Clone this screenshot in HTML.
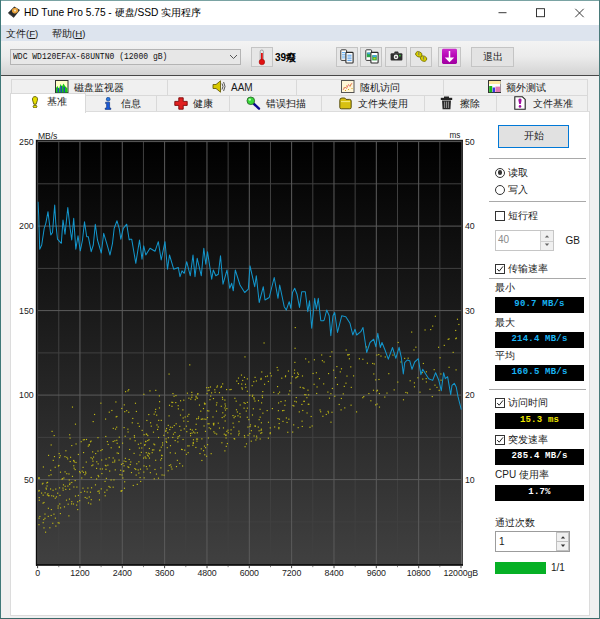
<!DOCTYPE html>
<html><head><meta charset="utf-8">
<style>
*{box-sizing:border-box;margin:0;padding:0}
html,body{width:600px;height:619px;overflow:hidden;background:#f0f0f0}
body{font-family:"Liberation Sans",sans-serif;font-size:9.6px;color:#1a1a1a;position:relative}
.a{position:absolute}
.t{position:absolute;white-space:nowrap;line-height:12px;height:12px}
.tab{position:absolute;background:#f0f0f0;border:1px solid #d9d9d9}
.btn{position:absolute;background:#e6e6e6;border:1px solid #c4c4c4}
.sep{position:absolute;left:489px;width:97px;height:1px;background:#a9a9a9}
.bb{position:absolute;left:495px;width:89px;height:16px;background:#000;text-align:center;font-family:"Liberation Mono",monospace;font-weight:bold;font-size:9px;line-height:14px;letter-spacing:0.2px}
.cb{position:absolute;left:495px;width:10px;height:10px;border:1px solid #333;background:#fff}
.cb svg{position:absolute;left:0;top:0}
.ax{position:absolute;letter-spacing:-0.1px;font-size:8.8px;line-height:10px;height:10px;color:#222;white-space:nowrap}
.axl{width:30px;left:3.5px;text-align:right}
.axb{width:40px;text-align:center;top:568px}
</style></head><body>

<!-- title bar -->
<div class="a" style="left:0;top:0;width:600px;height:25px;background:#fff"></div>
<svg class="a" style="left:7px;top:5px" width="14" height="14" viewBox="7 5 14 14">
 <path d="M7.9 13 L14.3 6.6 L20 10 L13.7 17.8 Z" fill="#2b2b2b"/>
 <path d="M9 13.6 L13.4 16.8" stroke="#555" stroke-width="0.8"/>
 <ellipse cx="15" cy="10.6" rx="3.1" ry="2.7" fill="#e8a23a" transform="rotate(-20 15 10.6)"/>
 <circle cx="15" cy="10.6" r="1.1" fill="#f3e3c3"/>
</svg>
<div class="t" style="left:24px;top:6.5px;font-size:10.2px;color:#000" id="title">HD Tune Pro 5.75 - 硬盘/SSD 实用程序</div>
<svg class="a" style="left:495px;top:5px" width="95" height="16" viewBox="0 0 95 16">
 <path d="M3.5 7.7 H11.5" stroke="#222" stroke-width="0.9" fill="none"/>
 <rect x="41.5" y="3.7" width="8" height="8" stroke="#222" stroke-width="0.9" fill="none"/>
 <path d="M80.3 3.8 L88.7 12.2 M88.7 3.8 L80.3 12.2" stroke="#222" stroke-width="0.9" fill="none"/>
</svg>

<!-- menu bar -->
<div class="a" style="left:0;top:25px;width:600px;height:16px;background:#dde4ee"></div>
<div class="t" style="left:6px;top:27.5px">文件(<u>F</u>)</div>
<div class="t" style="left:52px;top:27.5px">帮助(<u>H</u>)</div>

<!-- toolbar -->
<div class="a" style="left:0;top:41px;width:600px;height:34px;background:linear-gradient(#f3f3f3 0,#ececec 45%,#d3d3d3 100%)"></div>
<div class="a" style="left:0;top:74.5px;width:600px;height:1.3px;background:#484848"></div>
<div class="a" style="left:10px;top:49px;width:231px;height:16px;background:#e7e7e7;border:1px solid #b4b4b4"></div>
<div class="t" style="left:12.5px;top:51px;font-family:'Liberation Mono',monospace;font-size:9.6px;color:#111;transform:scaleX(0.838);transform-origin:0 50%" id="drive">WDC WD120EFAX-68UNTN0 (12000 gB)</div>
<svg class="a" style="left:229px;top:54px" width="9" height="6" viewBox="0 0 9 6"><path d="M1 1 L4.5 4.5 L8 1" stroke="#555" stroke-width="1" fill="none"/></svg>

<div class="btn" style="left:250.5px;top:47px;width:22.5px;height:19.5px"></div>
<svg class="a" style="left:256px;top:48.5px" width="12" height="17" viewBox="0 0 12 17">
 <rect x="4.2" y="1" width="3.2" height="11" rx="1.6" fill="#e8e8e8" stroke="#777" stroke-width="0.6"/>
 <rect x="5" y="4" width="1.8" height="8" fill="#e01010"/>
 <circle cx="5.9" cy="13" r="2.8" fill="#e01010" stroke="#900" stroke-width="0.5"/>
</svg>
<div class="t" style="left:275px;top:51.5px;font-weight:bold;font-size:10px;color:#000">39癈</div>

<div class="btn" style="left:335.5px;top:47px;width:22px;height:19.5px"></div>
<div class="btn" style="left:360px;top:47px;width:22px;height:19.5px"></div>
<div class="btn" style="left:385px;top:47px;width:22px;height:19.5px"></div>
<div class="btn" style="left:410px;top:47px;width:22px;height:19.5px"></div>
<div class="btn" style="left:438px;top:47px;width:23px;height:19.5px"></div>
<!-- copy icons -->
<svg class="a" style="left:339px;top:48px" width="16" height="17" viewBox="339 48 16 17">
 <rect x="340.8" y="49.8" width="5.8" height="10.6" rx="0.8" fill="#fff" stroke="#3a3a3a" stroke-width="1"/>
 <path d="M342 52.5h3.4M342 54.3h3.4M342 56.1h3.4M342 57.9h3.4" stroke="#5aa8f0" stroke-width="0.9"/>
 <rect x="345.9" y="52.4" width="7.2" height="10.6" rx="0.8" fill="#fff" stroke="#2a2a2a" stroke-width="1.1"/>
 <path d="M347.4 55.2h4.2M347.4 57h4.2M347.4 58.800h4.2M347.4 60.6h4.2" stroke="#4a98e8" stroke-width="0.95"/>
</svg>
<svg class="a" style="left:363.5px;top:48px" width="16" height="17" viewBox="339 48 16 17">
 <rect x="340.8" y="49.8" width="5.800" height="10.6" rx="0.8" fill="#fff" stroke="#3a3a3a" stroke-width="1"/>
 <rect x="341.800" y="52.600" width="3.8" height="4.6" fill="#28a848"/><rect x="342.4" y="52.6" width="2.6" height="1.6" fill="#48a0e8"/>
 <rect x="345.9" y="52.4" width="7.200" height="10.6" rx="0.8" fill="#fff" stroke="#2a2a2a" stroke-width="1.1"/>
 <rect x="347.2" y="55.2" width="4.6" height="5.2" fill="#28a848"/><rect x="347.8" y="55.2" width="3.4" height="1.8" fill="#48a0e8"/><rect x="348.4" y="57.6" width="2.2" height="1.8" fill="#c8d020"/>
</svg>
<svg class="a" style="left:390px;top:50px" width="13" height="12" viewBox="390 50 13 12">
 <rect x="390.6" y="53.2" width="11.8" height="7.4" rx="1" fill="#2e2e2e"/>
 <path d="M393.8 53.4 L394.8 51.4 H398 L399 53.4Z" fill="#2e2e2e"/>
 <circle cx="396" cy="56.9" r="2.3" fill="#f0f0f0"/><circle cx="396" cy="56.9" r="1" fill="#555"/>
 <rect x="399" y="54.9" width="1.7" height="1.5" fill="#28c028"/>
</svg>
<svg class="a" style="left:414px;top:50px" width="15" height="14" viewBox="414 50 15 14">
 <ellipse cx="418.8" cy="54.3" rx="3.3" ry="2.600" fill="#d8d000" stroke="#6a6400" stroke-width="0.7" transform="rotate(25 418.8 54.3)"/>
 <ellipse cx="423.6" cy="58.6" rx="3.3" ry="2.6" fill="#d8d000" stroke="#6a6400" stroke-width="0.7" transform="rotate(25 423.6 58.6)"/>
 <path d="M418.8 52.2V55.200M423.6 56.6V59.6" stroke="#777" stroke-width="1"/>
</svg>
<svg class="a" style="left:441px;top:48px" width="17" height="17" viewBox="441 48 17 17">
 <defs><linearGradient id="mg" x1="0" y1="0" x2="0" y2="1"><stop offset="0" stop-color="#cc2ccc"/><stop offset="0.45" stop-color="#b808b8"/><stop offset="1" stop-color="#a000a0"/></linearGradient></defs>
 <rect x="442" y="48.800" width="15" height="15.2" rx="1.4" fill="url(#mg)"/>
 <path d="M449.500 51V60" stroke="#fff" stroke-width="1.5"/>
 <path d="M444.800 57.600 L449.500 62.200 L454.200 57.600 Z" fill="#fff"/>
</svg>
<div class="btn" style="left:471px;top:47px;width:43px;height:20px;background:#e3e3e3;border-color:#c4c4c4"></div>
<div class="t" style="left:471px;top:51px;width:43.5px;text-align:center;font-size:10px">退出</div>

<!-- tabs row 1 -->
<div class="tab" style="left:11px;top:78.5px;width:156.5px;height:17px"></div>
<div class="tab" style="left:166.5px;top:78.5px;width:130px;height:17px"></div>
<div class="tab" style="left:295.5px;top:78.5px;width:148px;height:17px"></div>
<div class="tab" style="left:442.5px;top:78.5px;width:145.5px;height:17px"></div>
<!-- tabs row 2 -->
<div class="tab" style="left:85px;top:94.5px;width:71.5px;height:17px"></div>
<div class="tab" style="left:155.5px;top:94.5px;width:74.5px;height:17px"></div>
<div class="tab" style="left:229px;top:94.5px;width:92.5px;height:17px"></div>
<div class="tab" style="left:320.5px;top:94.5px;width:104px;height:17px"></div>
<div class="tab" style="left:423.5px;top:94.5px;width:73px;height:17px"></div>
<div class="tab" style="left:495.5px;top:94.5px;width:92.5px;height:17px"></div>
<!-- panel -->
<div class="a" style="left:10px;top:111px;width:579.5px;height:504.5px;background:#fff;border:1px solid #dcdcdc"></div>
<!-- selected tab -->
<div class="a" style="left:10px;top:92.5px;width:76px;height:20px;background:#fff;border:1px solid #d9d9d9;border-bottom:none"></div>

<!-- tab icons + labels row1 -->
<svg class="a" style="left:55px;top:80px" width="13.5" height="13" viewBox="0 0 13.5 13">
 <rect x="0.5" y="0.5" width="12.5" height="12" fill="#ffffc8" stroke="#333" stroke-width="1"/>
 <path d="M1 12.5V8l1.5-2 1.5 3 1.5-5 1.5 2.5 1.5-3 1.5 2.5 1.5 1.5 1 1v4z" fill="#18c818"/>
 <path d="M3.2 12.4V8M6.2 12.4V6M9.2 12.4V7" stroke="#2828d8" stroke-width="1.2"/>
</svg>
<div class="t" style="left:74px;top:81.5px;font-size:10px">磁盘监视器</div>
<svg class="a" style="left:212px;top:80px" width="14" height="13" viewBox="0 0 14 13">
 <path d="M1 4.5H4L8.5 0.8V12.2L4 8.5H1Z" fill="#d8c800" stroke="#5a5200" stroke-width="0.8"/>
 <path d="M10 3.5Q12 6.5 10 9.5M11.6 2Q14.4 6.5 11.6 11" stroke="#444" stroke-width="0.9" fill="none"/>
</svg>
<div class="t" style="left:231px;top:81.5px;font-size:10px">AAM</div>
<svg class="a" style="left:341px;top:80px" width="13.5" height="13" viewBox="0 0 13.5 13">
 <rect x="0.5" y="0.5" width="12.5" height="12" fill="#fff6d8" stroke="#555" stroke-width="1"/>
 <path d="M2 10l2-3 1.5 1.5 2-4 1.5 2 2-3.5" stroke="#e06060" stroke-width="0.8" fill="none"/>
 <path d="M2.5 8h1M5 6h1M7 9.5h1M9 5h1M10.5 8.5h1M4 10.5h1" stroke="#d0a020" stroke-width="1"/>
</svg>
<div class="t" style="left:360px;top:81.5px;font-size:10px">随机访问</div>
<svg class="a" style="left:487.5px;top:80px" width="13.5" height="13" viewBox="0 0 13.5 13">
 <rect x="0.5" y="0.5" width="12.5" height="12" fill="#fff" stroke="#333" stroke-width="1"/>
 <rect x="1" y="1" width="11.5" height="3" fill="#ffe9a0"/>
 <rect x="1.2" y="6" width="3" height="6.3" fill="#18b818"/>
 <rect x="4.6" y="7.5" width="2.4" height="4.8" fill="#3838e0"/>
 <rect x="7.4" y="6.6" width="4.8" height="5.4" fill="#d84a9a" opacity="0.75"/>
</svg>
<div class="t" style="left:506px;top:81.5px;font-size:10px">额外测试</div>

<!-- row2 -->
<svg class="a" style="left:30.5px;top:95.5px" width="8" height="12.5" viewBox="0 0 8 12.5">
 <path d="M4 0.6C6.2 0.6 6.8 2.4 6.4 4.2L5.2 8.2H2.8L1.6 4.2C1.2 2.4 1.8 0.6 4 0.6Z" fill="#e6e000" stroke="#4a4600" stroke-width="0.8"/>
 <ellipse cx="4" cy="10.6" rx="1.9" ry="1.4" fill="#e6e000" stroke="#4a4600" stroke-width="0.8"/>
</svg>
<div class="t" style="left:47px;top:96px;font-size:10px">基准</div>
<svg class="a" style="left:104px;top:96.5px" width="8" height="13" viewBox="0 0 8 13">
 <circle cx="4.2" cy="2.2" r="1.9" fill="#2a78e0" stroke="#103a80" stroke-width="0.6"/>
 <path d="M1.6 5.2H5.6V11H6.8V12.4H1.2V11H2.6V6.6H1.6Z" fill="#1a5ad8" stroke="#0a2a70" stroke-width="0.6"/>
</svg>
<div class="t" style="left:120.5px;top:97.5px;font-size:10px">信息</div>
<svg class="a" style="left:174px;top:97px" width="14" height="13" viewBox="0 0 14 13">
 <path d="M4.8 0.8H9.2V4.4H13.2V8.4H9.2V12.2H4.8V8.4H0.8V4.4H4.8Z" fill="#e02020" stroke="#7a0808" stroke-width="0.9"/>
</svg>
<div class="t" style="left:193px;top:97.5px;font-size:10px">健康</div>
<svg class="a" style="left:246px;top:96px" width="15" height="14" viewBox="0 0 15 14">
 <path d="M7 7L13 12.6" stroke="#0a0a90" stroke-width="2.4" stroke-linecap="round"/>
 <circle cx="4.8" cy="4.8" r="3.8" fill="#38d838" stroke="#2a6a2a" stroke-width="0.9"/>
 <circle cx="3.8" cy="3.6" r="1.2" fill="#b8ffb8"/>
</svg>
<div class="t" style="left:265.5px;top:97.5px;font-size:10px">错误扫描</div>
<svg class="a" style="left:339px;top:97px" width="13" height="12.5" viewBox="0 0 13 12.5">
 <path d="M0.8 3.2Q0.8 1 3 1H5.2Q6.4 1 7 2.4H10.6Q12.2 2.4 12.2 4V10.4Q12.2 11.8 10.8 11.8H2.2Q0.8 11.8 0.8 10.4Z" fill="#d8c010" stroke="#4a4000" stroke-width="0.9"/>
 <path d="M2 4.6H11" stroke="#f8ec80" stroke-width="1"/>
</svg>
<div class="t" style="left:358px;top:97.5px;font-size:10px">文件夹使用</div>
<svg class="a" style="left:440px;top:96px" width="13" height="14" viewBox="0 0 13 14">
 <rect x="4" y="0.5" width="5" height="2" fill="#222"/>
 <rect x="0.8" y="1.8" width="11.4" height="2.2" fill="#222"/>
 <path d="M2 4.6H11L10.4 13.2H2.6Z" fill="#2a2a2a"/>
 <path d="M4.6 5.6V12M6.5 5.6V12M8.4 5.6V12" stroke="#9a9a9a" stroke-width="0.9"/>
</svg>
<div class="t" style="left:460px;top:97.5px;font-size:10px">擦除</div>
<svg class="a" style="left:514px;top:96px" width="12" height="14" viewBox="0 0 12 14">
 <path d="M0.8 0.8H8.4L11.2 3.4V13.2H0.8Z" fill="#fff" stroke="#222" stroke-width="1.1"/>
 <path d="M6 2.6C7.6 2.6 7.8 4 7.4 5.2L6.8 8H5.2L4.6 5.2C4.2 4 4.4 2.6 6 2.6Z" fill="#a010a0"/>
 <circle cx="6" cy="10.4" r="1.3" fill="#a010a0"/>
</svg>
<div class="t" style="left:532.5px;top:97.5px;font-size:10px">文件基准</div>

<!-- chart -->
<svg class="a" style="left:0;top:0" width="600" height="619" viewBox="0 0 600 619">
 <defs>
  <linearGradient id="bg" x1="0" y1="0" x2="0" y2="1">
   <stop offset="0" stop-color="#000"/><stop offset="1" stop-color="#404040"/>
  </linearGradient>
 </defs>
 <rect x="35.800" y="139.8" width="427.2" height="425.8" fill="#1c1c1c"/>
 <rect x="37.3" y="141.3" width="425.2" height="423" fill="url(#bg)"/>
 <rect x="461" y="141" width="1.6" height="423.3" fill="#fff" fill-opacity="0.2"/>
 <g stroke-width="1" fill="none"><g stroke="#404040"><line x1="58.77" y1="141.5" x2="58.77" y2="564.2"/><line x1="101.11" y1="141.5" x2="101.11" y2="564.2"/><line x1="143.45" y1="141.5" x2="143.45" y2="564.2"/><line x1="185.79" y1="141.5" x2="185.79" y2="564.2"/><line x1="228.13" y1="141.5" x2="228.13" y2="564.2"/><line x1="270.47" y1="141.5" x2="270.47" y2="564.2"/><line x1="312.81" y1="141.5" x2="312.81" y2="564.2"/><line x1="355.15" y1="141.5" x2="355.15" y2="564.2"/><line x1="397.49" y1="141.5" x2="397.49" y2="564.2"/><line x1="439.83" y1="141.5" x2="439.83" y2="564.2"/><line x1="37.5" y1="183.8" x2="461.5" y2="183.8"/><line x1="37.5" y1="268.4" x2="461.5" y2="268.4"/><line x1="37.5" y1="352.9" x2="461.5" y2="352.9"/><line x1="37.5" y1="437.4" x2="461.5" y2="437.4"/><line x1="37.5" y1="521.9" x2="461.5" y2="521.9"/></g><g stroke="#5c5c5c"><line x1="37.60" y1="141.5" x2="37.60" y2="564.2"/><line x1="79.94" y1="141.5" x2="79.94" y2="564.2"/><line x1="122.28" y1="141.5" x2="122.28" y2="564.2"/><line x1="164.62" y1="141.5" x2="164.62" y2="564.2"/><line x1="206.96" y1="141.5" x2="206.96" y2="564.2"/><line x1="249.30" y1="141.5" x2="249.30" y2="564.2"/><line x1="291.64" y1="141.5" x2="291.64" y2="564.2"/><line x1="333.98" y1="141.5" x2="333.98" y2="564.2"/><line x1="376.32" y1="141.5" x2="376.32" y2="564.2"/><line x1="418.66" y1="141.5" x2="418.66" y2="564.2"/><line x1="37.5" y1="141.6" x2="461.5" y2="141.6"/><line x1="37.5" y1="226.1" x2="461.5" y2="226.1"/><line x1="37.5" y1="310.6" x2="461.5" y2="310.6"/><line x1="37.5" y1="395.1" x2="461.5" y2="395.1"/><line x1="37.5" y1="479.6" x2="461.5" y2="479.6"/></g></g>
 <g fill="#c4bc14"><rect x="229.4" y="389.1" width="1.15" height="1.15"/><rect x="252.8" y="408.2" width="1.15" height="1.15"/><rect x="77.8" y="453.9" width="1.15" height="1.15"/><rect x="331.3" y="351.3" width="1.15" height="1.15"/><rect x="104.6" y="495.2" width="1.15" height="1.15"/><rect x="118.5" y="459.5" width="1.15" height="1.15"/><rect x="224.3" y="407.4" width="1.15" height="1.15"/><rect x="249.4" y="426.0" width="1.15" height="1.15"/><rect x="171.4" y="468.5" width="1.15" height="1.15"/><rect x="38.2" y="477.6" width="1.15" height="1.15"/><rect x="68.9" y="498.5" width="1.15" height="1.15"/><rect x="74.9" y="423.6" width="1.15" height="1.15"/><rect x="87.9" y="502.4" width="1.15" height="1.15"/><rect x="375.1" y="379.3" width="1.15" height="1.15"/><rect x="118.7" y="446.4" width="1.15" height="1.15"/><rect x="87.3" y="487.5" width="1.15" height="1.15"/><rect x="166.7" y="447.1" width="1.15" height="1.15"/><rect x="80.4" y="491.8" width="1.15" height="1.15"/><rect x="163.3" y="434.8" width="1.15" height="1.15"/><rect x="140.8" y="451.8" width="1.15" height="1.15"/><rect x="115.3" y="401.4" width="1.15" height="1.15"/><rect x="143.5" y="434.1" width="1.15" height="1.15"/><rect x="121.2" y="407.9" width="1.15" height="1.15"/><rect x="216.3" y="386.6" width="1.15" height="1.15"/><rect x="138.8" y="425.8" width="1.15" height="1.15"/><rect x="290.3" y="382.5" width="1.15" height="1.15"/><rect x="67.1" y="458.3" width="1.15" height="1.15"/><rect x="297.9" y="373.7" width="1.15" height="1.15"/><rect x="45.0" y="531.6" width="1.15" height="1.15"/><rect x="112.6" y="486.6" width="1.15" height="1.15"/><rect x="191.2" y="396.7" width="1.15" height="1.15"/><rect x="97.4" y="437.1" width="1.15" height="1.15"/><rect x="47.0" y="481.8" width="1.15" height="1.15"/><rect x="172.9" y="433.6" width="1.15" height="1.15"/><rect x="186.8" y="392.6" width="1.15" height="1.15"/><rect x="214.5" y="391.7" width="1.15" height="1.15"/><rect x="302.4" y="387.1" width="1.15" height="1.15"/><rect x="71.9" y="406.5" width="1.15" height="1.15"/><rect x="224.3" y="399.5" width="1.15" height="1.15"/><rect x="50.6" y="514.9" width="1.15" height="1.15"/><rect x="146.2" y="433.8" width="1.15" height="1.15"/><rect x="123.7" y="404.3" width="1.15" height="1.15"/><rect x="224.9" y="405.4" width="1.15" height="1.15"/><rect x="122.0" y="442.6" width="1.15" height="1.15"/><rect x="284.7" y="400.2" width="1.15" height="1.15"/><rect x="155.1" y="459.7" width="1.15" height="1.15"/><rect x="128.6" y="458.9" width="1.15" height="1.15"/><rect x="171.4" y="405.7" width="1.15" height="1.15"/><rect x="69.6" y="461.0" width="1.15" height="1.15"/><rect x="168.7" y="464.9" width="1.15" height="1.15"/><rect x="230.4" y="433.2" width="1.15" height="1.15"/><rect x="97.6" y="474.9" width="1.15" height="1.15"/><rect x="327.5" y="410.8" width="1.15" height="1.15"/><rect x="42.6" y="522.1" width="1.15" height="1.15"/><rect x="153.2" y="449.3" width="1.15" height="1.15"/><rect x="204.5" y="403.2" width="1.15" height="1.15"/><rect x="93.0" y="456.5" width="1.15" height="1.15"/><rect x="197.4" y="393.2" width="1.15" height="1.15"/><rect x="313.5" y="383.7" width="1.15" height="1.15"/><rect x="128.2" y="389.1" width="1.15" height="1.15"/><rect x="265.1" y="376.0" width="1.15" height="1.15"/><rect x="73.0" y="460.2" width="1.15" height="1.15"/><rect x="244.2" y="436.7" width="1.15" height="1.15"/><rect x="376.3" y="354.5" width="1.15" height="1.15"/><rect x="97.4" y="450.5" width="1.15" height="1.15"/><rect x="439.5" y="357.2" width="1.15" height="1.15"/><rect x="160.7" y="446.6" width="1.15" height="1.15"/><rect x="169.8" y="426.6" width="1.15" height="1.15"/><rect x="126.1" y="410.1" width="1.15" height="1.15"/><rect x="280.4" y="401.0" width="1.15" height="1.15"/><rect x="294.0" y="369.5" width="1.15" height="1.15"/><rect x="207.4" y="423.2" width="1.15" height="1.15"/><rect x="330.3" y="393.1" width="1.15" height="1.15"/><rect x="151.9" y="449.4" width="1.15" height="1.15"/><rect x="239.6" y="404.4" width="1.15" height="1.15"/><rect x="429.4" y="388.7" width="1.15" height="1.15"/><rect x="120.1" y="469.7" width="1.15" height="1.15"/><rect x="188.3" y="413.8" width="1.15" height="1.15"/><rect x="89.9" y="491.6" width="1.15" height="1.15"/><rect x="262.3" y="412.6" width="1.15" height="1.15"/><rect x="261.9" y="397.0" width="1.15" height="1.15"/><rect x="308.1" y="394.3" width="1.15" height="1.15"/><rect x="400.4" y="361.4" width="1.15" height="1.15"/><rect x="171.2" y="401.7" width="1.15" height="1.15"/><rect x="413.4" y="349.4" width="1.15" height="1.15"/><rect x="147.8" y="455.5" width="1.15" height="1.15"/><rect x="372.1" y="362.9" width="1.15" height="1.15"/><rect x="45.5" y="487.5" width="1.15" height="1.15"/><rect x="447.6" y="338.8" width="1.15" height="1.15"/><rect x="250.7" y="440.6" width="1.15" height="1.15"/><rect x="82.9" y="471.8" width="1.15" height="1.15"/><rect x="278.6" y="423.0" width="1.15" height="1.15"/><rect x="430.1" y="329.0" width="1.15" height="1.15"/><rect x="233.5" y="417.1" width="1.15" height="1.15"/><rect x="256.0" y="435.6" width="1.15" height="1.15"/><rect x="114.7" y="469.3" width="1.15" height="1.15"/><rect x="120.5" y="490.5" width="1.15" height="1.15"/><rect x="304.2" y="394.1" width="1.15" height="1.15"/><rect x="147.2" y="440.0" width="1.15" height="1.15"/><rect x="343.7" y="385.8" width="1.15" height="1.15"/><rect x="42.5" y="502.6" width="1.15" height="1.15"/><rect x="136.2" y="463.2" width="1.15" height="1.15"/><rect x="263.5" y="342.4" width="1.15" height="1.15"/><rect x="452.6" y="351.8" width="1.15" height="1.15"/><rect x="146.6" y="468.4" width="1.15" height="1.15"/><rect x="196.9" y="397.6" width="1.15" height="1.15"/><rect x="270.7" y="375.3" width="1.15" height="1.15"/><rect x="380.4" y="355.5" width="1.15" height="1.15"/><rect x="57.1" y="492.6" width="1.15" height="1.15"/><rect x="109.5" y="486.8" width="1.15" height="1.15"/><rect x="260.8" y="422.2" width="1.15" height="1.15"/><rect x="157.9" y="477.6" width="1.15" height="1.15"/><rect x="141.6" y="429.8" width="1.15" height="1.15"/><rect x="203.0" y="450.1" width="1.15" height="1.15"/><rect x="69.1" y="483.9" width="1.15" height="1.15"/><rect x="293.3" y="405.4" width="1.15" height="1.15"/><rect x="124.1" y="481.2" width="1.15" height="1.15"/><rect x="225.3" y="434.3" width="1.15" height="1.15"/><rect x="284.3" y="404.7" width="1.15" height="1.15"/><rect x="348.6" y="354.0" width="1.15" height="1.15"/><rect x="189.9" y="432.9" width="1.15" height="1.15"/><rect x="288.3" y="418.6" width="1.15" height="1.15"/><rect x="143.3" y="393.7" width="1.15" height="1.15"/><rect x="54.7" y="497.6" width="1.15" height="1.15"/><rect x="301.7" y="425.9" width="1.15" height="1.15"/><rect x="74.6" y="469.0" width="1.15" height="1.15"/><rect x="195.9" y="438.5" width="1.15" height="1.15"/><rect x="69.4" y="482.6" width="1.15" height="1.15"/><rect x="363.2" y="396.0" width="1.15" height="1.15"/><rect x="175.6" y="423.2" width="1.15" height="1.15"/><rect x="218.9" y="392.1" width="1.15" height="1.15"/><rect x="71.2" y="481.9" width="1.15" height="1.15"/><rect x="327.9" y="412.3" width="1.15" height="1.15"/><rect x="128.2" y="466.9" width="1.15" height="1.15"/><rect x="157.7" y="426.4" width="1.15" height="1.15"/><rect x="193.0" y="431.4" width="1.15" height="1.15"/><rect x="172.4" y="393.0" width="1.15" height="1.15"/><rect x="143.0" y="457.5" width="1.15" height="1.15"/><rect x="205.3" y="418.7" width="1.15" height="1.15"/><rect x="112.7" y="427.8" width="1.15" height="1.15"/><rect x="47.4" y="493.2" width="1.15" height="1.15"/><rect x="378.2" y="354.0" width="1.15" height="1.15"/><rect x="73.6" y="467.6" width="1.15" height="1.15"/><rect x="73.8" y="461.3" width="1.15" height="1.15"/><rect x="312.5" y="372.9" width="1.15" height="1.15"/><rect x="258.6" y="419.1" width="1.15" height="1.15"/><rect x="246.8" y="407.6" width="1.15" height="1.15"/><rect x="259.6" y="416.6" width="1.15" height="1.15"/><rect x="215.9" y="404.4" width="1.15" height="1.15"/><rect x="196.8" y="432.2" width="1.15" height="1.15"/><rect x="161.5" y="455.1" width="1.15" height="1.15"/><rect x="86.6" y="491.4" width="1.15" height="1.15"/><rect x="64.4" y="456.1" width="1.15" height="1.15"/><rect x="53.4" y="513.6" width="1.15" height="1.15"/><rect x="137.6" y="469.4" width="1.15" height="1.15"/><rect x="116.2" y="439.7" width="1.15" height="1.15"/><rect x="169.9" y="445.1" width="1.15" height="1.15"/><rect x="148.2" y="414.0" width="1.15" height="1.15"/><rect x="242.1" y="379.9" width="1.15" height="1.15"/><rect x="261.2" y="371.4" width="1.15" height="1.15"/><rect x="316.1" y="392.9" width="1.15" height="1.15"/><rect x="195.2" y="428.9" width="1.15" height="1.15"/><rect x="104.5" y="480.8" width="1.15" height="1.15"/><rect x="150.7" y="425.6" width="1.15" height="1.15"/><rect x="38.6" y="497.0" width="1.15" height="1.15"/><rect x="72.9" y="503.4" width="1.15" height="1.15"/><rect x="241.1" y="383.5" width="1.15" height="1.15"/><rect x="425.8" y="381.4" width="1.15" height="1.15"/><rect x="267.8" y="380.9" width="1.15" height="1.15"/><rect x="169.7" y="452.2" width="1.15" height="1.15"/><rect x="235.6" y="400.6" width="1.15" height="1.15"/><rect x="82.7" y="439.3" width="1.15" height="1.15"/><rect x="43.2" y="519.0" width="1.15" height="1.15"/><rect x="276.6" y="366.9" width="1.15" height="1.15"/><rect x="376.2" y="390.5" width="1.15" height="1.15"/><rect x="197.0" y="438.5" width="1.15" height="1.15"/><rect x="203.9" y="445.5" width="1.15" height="1.15"/><rect x="347.4" y="354.0" width="1.15" height="1.15"/><rect x="344.2" y="407.3" width="1.15" height="1.15"/><rect x="97.6" y="463.3" width="1.15" height="1.15"/><rect x="114.1" y="461.3" width="1.15" height="1.15"/><rect x="76.1" y="504.5" width="1.15" height="1.15"/><rect x="210.1" y="395.5" width="1.15" height="1.15"/><rect x="254.4" y="400.5" width="1.15" height="1.15"/><rect x="201.3" y="459.9" width="1.15" height="1.15"/><rect x="207.5" y="390.1" width="1.15" height="1.15"/><rect x="45.8" y="488.5" width="1.15" height="1.15"/><rect x="83.0" y="452.0" width="1.15" height="1.15"/><rect x="105.0" y="418.5" width="1.15" height="1.15"/><rect x="187.1" y="415.6" width="1.15" height="1.15"/><rect x="121.4" y="474.4" width="1.15" height="1.15"/><rect x="73.2" y="465.2" width="1.15" height="1.15"/><rect x="177.2" y="437.7" width="1.15" height="1.15"/><rect x="90.5" y="440.5" width="1.15" height="1.15"/><rect x="267.9" y="421.7" width="1.15" height="1.15"/><rect x="89.9" y="441.2" width="1.15" height="1.15"/><rect x="139.9" y="468.6" width="1.15" height="1.15"/><rect x="269.7" y="427.3" width="1.15" height="1.15"/><rect x="316.5" y="386.4" width="1.15" height="1.15"/><rect x="199.4" y="453.0" width="1.15" height="1.15"/><rect x="122.4" y="462.9" width="1.15" height="1.15"/><rect x="278.9" y="418.6" width="1.15" height="1.15"/><rect x="278.3" y="428.1" width="1.15" height="1.15"/><rect x="321.8" y="360.1" width="1.15" height="1.15"/><rect x="236.8" y="411.4" width="1.15" height="1.15"/><rect x="243.5" y="402.1" width="1.15" height="1.15"/><rect x="211.0" y="392.3" width="1.15" height="1.15"/><rect x="260.5" y="377.8" width="1.15" height="1.15"/><rect x="173.7" y="425.0" width="1.15" height="1.15"/><rect x="356.0" y="411.3" width="1.15" height="1.15"/><rect x="90.6" y="476.9" width="1.15" height="1.15"/><rect x="60.0" y="507.3" width="1.15" height="1.15"/><rect x="167.6" y="470.2" width="1.15" height="1.15"/><rect x="216.3" y="402.2" width="1.15" height="1.15"/><rect x="79.7" y="472.2" width="1.15" height="1.15"/><rect x="440.3" y="373.4" width="1.15" height="1.15"/><rect x="175.4" y="395.0" width="1.15" height="1.15"/><rect x="206.0" y="455.7" width="1.15" height="1.15"/><rect x="51.2" y="495.2" width="1.15" height="1.15"/><rect x="237.9" y="383.0" width="1.15" height="1.15"/><rect x="417.3" y="377.2" width="1.15" height="1.15"/><rect x="237.9" y="377.5" width="1.15" height="1.15"/><rect x="123.5" y="427.0" width="1.15" height="1.15"/><rect x="59.2" y="503.4" width="1.15" height="1.15"/><rect x="339.7" y="371.3" width="1.15" height="1.15"/><rect x="226.3" y="430.8" width="1.15" height="1.15"/><rect x="338.6" y="403.9" width="1.15" height="1.15"/><rect x="195.6" y="397.3" width="1.15" height="1.15"/><rect x="134.9" y="402.7" width="1.15" height="1.15"/><rect x="155.1" y="408.8" width="1.15" height="1.15"/><rect x="224.3" y="450.3" width="1.15" height="1.15"/><rect x="291.7" y="376.1" width="1.15" height="1.15"/><rect x="74.9" y="495.5" width="1.15" height="1.15"/><rect x="156.1" y="414.6" width="1.15" height="1.15"/><rect x="455.8" y="337.5" width="1.15" height="1.15"/><rect x="200.7" y="448.3" width="1.15" height="1.15"/><rect x="273.2" y="391.8" width="1.15" height="1.15"/><rect x="251.9" y="414.4" width="1.15" height="1.15"/><rect x="440.5" y="379.6" width="1.15" height="1.15"/><rect x="295.2" y="377.3" width="1.15" height="1.15"/><rect x="137.8" y="443.7" width="1.15" height="1.15"/><rect x="249.1" y="394.7" width="1.15" height="1.15"/><rect x="114.2" y="459.6" width="1.15" height="1.15"/><rect x="221.9" y="396.8" width="1.15" height="1.15"/><rect x="68.7" y="479.4" width="1.15" height="1.15"/><rect x="372.9" y="389.7" width="1.15" height="1.15"/><rect x="55.9" y="496.3" width="1.15" height="1.15"/><rect x="150.0" y="422.2" width="1.15" height="1.15"/><rect x="110.6" y="447.2" width="1.15" height="1.15"/><rect x="63.9" y="506.3" width="1.15" height="1.15"/><rect x="448.5" y="338.3" width="1.15" height="1.15"/><rect x="455.2" y="338.1" width="1.15" height="1.15"/><rect x="54.6" y="466.7" width="1.15" height="1.15"/><rect x="204.2" y="454.2" width="1.15" height="1.15"/><rect x="52.5" y="489.7" width="1.15" height="1.15"/><rect x="135.2" y="468.9" width="1.15" height="1.15"/><rect x="233.2" y="426.6" width="1.15" height="1.15"/><rect x="54.8" y="517.6" width="1.15" height="1.15"/><rect x="183.2" y="399.6" width="1.15" height="1.15"/><rect x="204.2" y="403.5" width="1.15" height="1.15"/><rect x="129.1" y="448.9" width="1.15" height="1.15"/><rect x="107.3" y="464.6" width="1.15" height="1.15"/><rect x="168.5" y="373.5" width="1.15" height="1.15"/><rect x="402.9" y="399.2" width="1.15" height="1.15"/><rect x="330.4" y="421.6" width="1.15" height="1.15"/><rect x="115.0" y="428.5" width="1.15" height="1.15"/><rect x="340.5" y="409.3" width="1.15" height="1.15"/><rect x="421.7" y="372.0" width="1.15" height="1.15"/><rect x="73.2" y="459.9" width="1.15" height="1.15"/><rect x="257.7" y="426.5" width="1.15" height="1.15"/><rect x="55.3" y="525.5" width="1.15" height="1.15"/><rect x="170.1" y="464.3" width="1.15" height="1.15"/><rect x="336.9" y="383.9" width="1.15" height="1.15"/><rect x="100.3" y="450.0" width="1.15" height="1.15"/><rect x="209.4" y="399.1" width="1.15" height="1.15"/><rect x="161.5" y="474.4" width="1.15" height="1.15"/><rect x="48.4" y="475.1" width="1.15" height="1.15"/><rect x="129.5" y="438.3" width="1.15" height="1.15"/><rect x="405.3" y="391.9" width="1.15" height="1.15"/><rect x="218.9" y="427.5" width="1.15" height="1.15"/><rect x="176.8" y="459.8" width="1.15" height="1.15"/><rect x="208.2" y="410.4" width="1.15" height="1.15"/><rect x="139.4" y="454.5" width="1.15" height="1.15"/><rect x="101.8" y="468.4" width="1.15" height="1.15"/><rect x="334.2" y="395.7" width="1.15" height="1.15"/><rect x="64.6" y="485.7" width="1.15" height="1.15"/><rect x="285.8" y="417.4" width="1.15" height="1.15"/><rect x="48.0" y="454.8" width="1.15" height="1.15"/><rect x="148.8" y="447.9" width="1.15" height="1.15"/><rect x="191.4" y="394.4" width="1.15" height="1.15"/><rect x="303.4" y="400.7" width="1.15" height="1.15"/><rect x="154.8" y="411.3" width="1.15" height="1.15"/><rect x="422.8" y="362.9" width="1.15" height="1.15"/><rect x="168.5" y="415.3" width="1.15" height="1.15"/><rect x="119.4" y="474.0" width="1.15" height="1.15"/><rect x="38.4" y="524.1" width="1.15" height="1.15"/><rect x="246.8" y="401.8" width="1.15" height="1.15"/><rect x="184.6" y="416.4" width="1.15" height="1.15"/><rect x="105.5" y="458.5" width="1.15" height="1.15"/><rect x="194.3" y="432.4" width="1.15" height="1.15"/><rect x="138.3" y="472.5" width="1.15" height="1.15"/><rect x="255.3" y="439.4" width="1.15" height="1.15"/><rect x="81.2" y="477.4" width="1.15" height="1.15"/><rect x="106.8" y="441.0" width="1.15" height="1.15"/><rect x="145.4" y="457.6" width="1.15" height="1.15"/><rect x="340.8" y="397.9" width="1.15" height="1.15"/><rect x="179.2" y="425.8" width="1.15" height="1.15"/><rect x="278.0" y="402.4" width="1.15" height="1.15"/><rect x="91.0" y="487.2" width="1.15" height="1.15"/><rect x="116.1" y="426.6" width="1.15" height="1.15"/><rect x="448.5" y="366.7" width="1.15" height="1.15"/><rect x="305.1" y="358.3" width="1.15" height="1.15"/><rect x="58.6" y="522.5" width="1.15" height="1.15"/><rect x="159.0" y="401.1" width="1.15" height="1.15"/><rect x="177.6" y="436.1" width="1.15" height="1.15"/><rect x="196.0" y="418.3" width="1.15" height="1.15"/><rect x="158.0" y="436.9" width="1.15" height="1.15"/><rect x="376.5" y="403.5" width="1.15" height="1.15"/><rect x="244.5" y="446.1" width="1.15" height="1.15"/><rect x="277.4" y="418.0" width="1.15" height="1.15"/><rect x="134.3" y="468.0" width="1.15" height="1.15"/><rect x="59.7" y="455.2" width="1.15" height="1.15"/><rect x="71.2" y="445.0" width="1.15" height="1.15"/><rect x="123.5" y="460.5" width="1.15" height="1.15"/><rect x="62.4" y="487.5" width="1.15" height="1.15"/><rect x="155.2" y="389.8" width="1.15" height="1.15"/><rect x="225.5" y="437.4" width="1.15" height="1.15"/><rect x="49.3" y="527.2" width="1.15" height="1.15"/><rect x="189.8" y="428.8" width="1.15" height="1.15"/><rect x="42.4" y="482.7" width="1.15" height="1.15"/><rect x="261.0" y="402.3" width="1.15" height="1.15"/><rect x="206.9" y="417.0" width="1.15" height="1.15"/><rect x="455.1" y="329.9" width="1.15" height="1.15"/><rect x="336.3" y="366.0" width="1.15" height="1.15"/><rect x="282.0" y="410.1" width="1.15" height="1.15"/><rect x="192.3" y="444.7" width="1.15" height="1.15"/><rect x="77.8" y="494.9" width="1.15" height="1.15"/><rect x="325.7" y="413.9" width="1.15" height="1.15"/><rect x="186.2" y="431.1" width="1.15" height="1.15"/><rect x="208.6" y="389.6" width="1.15" height="1.15"/><rect x="124.6" y="435.7" width="1.15" height="1.15"/><rect x="83.8" y="439.1" width="1.15" height="1.15"/><rect x="130.9" y="472.0" width="1.15" height="1.15"/><rect x="153.6" y="413.6" width="1.15" height="1.15"/><rect x="115.6" y="416.3" width="1.15" height="1.15"/><rect x="306.5" y="412.4" width="1.15" height="1.15"/><rect x="251.6" y="385.1" width="1.15" height="1.15"/><rect x="319.5" y="409.4" width="1.15" height="1.15"/><rect x="292.1" y="431.5" width="1.15" height="1.15"/><rect x="303.4" y="387.8" width="1.15" height="1.15"/><rect x="432.1" y="325.5" width="1.15" height="1.15"/><rect x="350.2" y="366.3" width="1.15" height="1.15"/><rect x="208.1" y="387.1" width="1.15" height="1.15"/><rect x="245.7" y="410.5" width="1.15" height="1.15"/><rect x="458.3" y="323.9" width="1.15" height="1.15"/><rect x="144.1" y="444.7" width="1.15" height="1.15"/><rect x="404.1" y="357.8" width="1.15" height="1.15"/><rect x="69.1" y="488.7" width="1.15" height="1.15"/><rect x="140.3" y="442.7" width="1.15" height="1.15"/><rect x="375.0" y="404.3" width="1.15" height="1.15"/><rect x="53.6" y="435.0" width="1.15" height="1.15"/><rect x="87.7" y="445.6" width="1.15" height="1.15"/><rect x="68.4" y="473.4" width="1.15" height="1.15"/><rect x="121.4" y="490.0" width="1.15" height="1.15"/><rect x="181.6" y="449.0" width="1.15" height="1.15"/><rect x="293.1" y="424.3" width="1.15" height="1.15"/><rect x="92.6" y="421.0" width="1.15" height="1.15"/><rect x="189.2" y="364.3" width="1.15" height="1.15"/><rect x="169.2" y="429.0" width="1.15" height="1.15"/><rect x="217.7" y="422.6" width="1.15" height="1.15"/><rect x="252.2" y="394.6" width="1.15" height="1.15"/><rect x="137.4" y="422.8" width="1.15" height="1.15"/><rect x="159.2" y="450.1" width="1.15" height="1.15"/><rect x="227.7" y="432.2" width="1.15" height="1.15"/><rect x="224.5" y="403.4" width="1.15" height="1.15"/><rect x="322.3" y="415.7" width="1.15" height="1.15"/><rect x="215.9" y="410.6" width="1.15" height="1.15"/><rect x="287.9" y="370.5" width="1.15" height="1.15"/><rect x="75.4" y="461.9" width="1.15" height="1.15"/><rect x="321.1" y="354.4" width="1.15" height="1.15"/><rect x="47.8" y="507.7" width="1.15" height="1.15"/><rect x="234.6" y="415.8" width="1.15" height="1.15"/><rect x="66.2" y="473.1" width="1.15" height="1.15"/><rect x="130.2" y="461.4" width="1.15" height="1.15"/><rect x="98.5" y="490.4" width="1.15" height="1.15"/><rect x="108.6" y="457.1" width="1.15" height="1.15"/><rect x="145.2" y="440.8" width="1.15" height="1.15"/><rect x="88.6" y="444.5" width="1.15" height="1.15"/><rect x="48.2" y="495.0" width="1.15" height="1.15"/><rect x="85.0" y="471.4" width="1.15" height="1.15"/><rect x="90.7" y="499.1" width="1.15" height="1.15"/><rect x="254.7" y="425.7" width="1.15" height="1.15"/><rect x="213.1" y="424.4" width="1.15" height="1.15"/><rect x="274.1" y="426.4" width="1.15" height="1.15"/><rect x="397.6" y="341.9" width="1.15" height="1.15"/><rect x="209.9" y="386.4" width="1.15" height="1.15"/><rect x="212.9" y="398.0" width="1.15" height="1.15"/><rect x="104.2" y="491.7" width="1.15" height="1.15"/><rect x="165.2" y="430.8" width="1.15" height="1.15"/><rect x="57.5" y="507.5" width="1.15" height="1.15"/><rect x="85.3" y="472.6" width="1.15" height="1.15"/><rect x="249.9" y="424.3" width="1.15" height="1.15"/><rect x="350.7" y="386.8" width="1.15" height="1.15"/><rect x="239.7" y="416.4" width="1.15" height="1.15"/><rect x="59.0" y="487.3" width="1.15" height="1.15"/><rect x="269.6" y="433.1" width="1.15" height="1.15"/><rect x="195.3" y="446.9" width="1.15" height="1.15"/><rect x="41.8" y="483.4" width="1.15" height="1.15"/><rect x="192.7" y="442.9" width="1.15" height="1.15"/><rect x="295.7" y="397.0" width="1.15" height="1.15"/><rect x="256.3" y="437.4" width="1.15" height="1.15"/><rect x="144.6" y="456.4" width="1.15" height="1.15"/><rect x="158.9" y="407.4" width="1.15" height="1.15"/><rect x="172.2" y="436.9" width="1.15" height="1.15"/><rect x="62.0" y="478.2" width="1.15" height="1.15"/><rect x="308.2" y="361.4" width="1.15" height="1.15"/><rect x="283.3" y="409.9" width="1.15" height="1.15"/><rect x="425.8" y="371.2" width="1.15" height="1.15"/><rect x="227.4" y="429.6" width="1.15" height="1.15"/><rect x="348.8" y="358.2" width="1.15" height="1.15"/><rect x="85.9" y="438.9" width="1.15" height="1.15"/><rect x="127.3" y="428.6" width="1.15" height="1.15"/><rect x="90.2" y="503.4" width="1.15" height="1.15"/><rect x="220.7" y="405.7" width="1.15" height="1.15"/><rect x="246.8" y="390.7" width="1.15" height="1.15"/><rect x="82.5" y="466.8" width="1.15" height="1.15"/><rect x="123.5" y="465.2" width="1.15" height="1.15"/><rect x="288.2" y="393.6" width="1.15" height="1.15"/><rect x="285.0" y="375.3" width="1.15" height="1.15"/><rect x="333.0" y="369.6" width="1.15" height="1.15"/><rect x="281.2" y="377.6" width="1.15" height="1.15"/><rect x="197.7" y="418.0" width="1.15" height="1.15"/><rect x="243.9" y="435.1" width="1.15" height="1.15"/><rect x="167.7" y="424.8" width="1.15" height="1.15"/><rect x="278.3" y="426.9" width="1.15" height="1.15"/><rect x="378.8" y="393.0" width="1.15" height="1.15"/><rect x="122.3" y="477.4" width="1.15" height="1.15"/><rect x="329.6" y="355.9" width="1.15" height="1.15"/><rect x="161.0" y="457.9" width="1.15" height="1.15"/><rect x="143.4" y="465.3" width="1.15" height="1.15"/><rect x="162.0" y="442.3" width="1.15" height="1.15"/><rect x="153.3" y="443.5" width="1.15" height="1.15"/><rect x="407.6" y="357.6" width="1.15" height="1.15"/><rect x="295.8" y="401.3" width="1.15" height="1.15"/><rect x="365.9" y="346.4" width="1.15" height="1.15"/><rect x="191.4" y="432.5" width="1.15" height="1.15"/><rect x="194.7" y="399.1" width="1.15" height="1.15"/><rect x="277.4" y="369.6" width="1.15" height="1.15"/><rect x="84.6" y="496.9" width="1.15" height="1.15"/><rect x="419.4" y="391.6" width="1.15" height="1.15"/><rect x="406.9" y="392.4" width="1.15" height="1.15"/><rect x="50.6" y="444.4" width="1.15" height="1.15"/><rect x="258.5" y="430.2" width="1.15" height="1.15"/><rect x="260.8" y="428.6" width="1.15" height="1.15"/><rect x="243.5" y="407.6" width="1.15" height="1.15"/><rect x="95.1" y="453.0" width="1.15" height="1.15"/><rect x="46.5" y="485.4" width="1.15" height="1.15"/><rect x="297.2" y="375.9" width="1.15" height="1.15"/><rect x="51.5" y="430.8" width="1.15" height="1.15"/><rect x="48.2" y="495.2" width="1.15" height="1.15"/><rect x="257.9" y="400.1" width="1.15" height="1.15"/><rect x="38.3" y="490.5" width="1.15" height="1.15"/><rect x="179.9" y="414.5" width="1.15" height="1.15"/><rect x="148.9" y="457.5" width="1.15" height="1.15"/><rect x="323.5" y="361.4" width="1.15" height="1.15"/><rect x="112.3" y="461.7" width="1.15" height="1.15"/><rect x="138.8" y="447.5" width="1.15" height="1.15"/><rect x="145.8" y="466.0" width="1.15" height="1.15"/><rect x="165.5" y="438.3" width="1.15" height="1.15"/><rect x="71.2" y="501.1" width="1.15" height="1.15"/><rect x="213.3" y="431.2" width="1.15" height="1.15"/><rect x="201.8" y="418.4" width="1.15" height="1.15"/><rect x="181.0" y="448.8" width="1.15" height="1.15"/><rect x="239.3" y="413.1" width="1.15" height="1.15"/><rect x="198.9" y="404.5" width="1.15" height="1.15"/><rect x="125.0" y="391.1" width="1.15" height="1.15"/><rect x="182.6" y="417.4" width="1.15" height="1.15"/><rect x="438.0" y="346.7" width="1.15" height="1.15"/><rect x="195.5" y="395.8" width="1.15" height="1.15"/><rect x="68.3" y="515.3" width="1.15" height="1.15"/><rect x="167.8" y="437.1" width="1.15" height="1.15"/><rect x="266.6" y="410.0" width="1.15" height="1.15"/><rect x="438.6" y="389.8" width="1.15" height="1.15"/><rect x="168.9" y="404.7" width="1.15" height="1.15"/><rect x="105.8" y="477.8" width="1.15" height="1.15"/><rect x="232.5" y="422.6" width="1.15" height="1.15"/><rect x="118.7" y="436.6" width="1.15" height="1.15"/><rect x="59.9" y="471.6" width="1.15" height="1.15"/><rect x="127.5" y="431.4" width="1.15" height="1.15"/><rect x="249.2" y="433.0" width="1.15" height="1.15"/><rect x="44.4" y="517.7" width="1.15" height="1.15"/><rect x="299.7" y="386.7" width="1.15" height="1.15"/><rect x="172.1" y="401.9" width="1.15" height="1.15"/><rect x="214.4" y="432.6" width="1.15" height="1.15"/><rect x="424.5" y="329.4" width="1.15" height="1.15"/><rect x="411.1" y="331.5" width="1.15" height="1.15"/><rect x="160.1" y="459.5" width="1.15" height="1.15"/><rect x="284.9" y="376.1" width="1.15" height="1.15"/><rect x="79.0" y="471.1" width="1.15" height="1.15"/><rect x="248.3" y="419.1" width="1.15" height="1.15"/><rect x="38.7" y="499.7" width="1.15" height="1.15"/><rect x="305.3" y="394.2" width="1.15" height="1.15"/><rect x="241.8" y="388.5" width="1.15" height="1.15"/><rect x="225.3" y="434.9" width="1.15" height="1.15"/><rect x="145.7" y="452.1" width="1.15" height="1.15"/><rect x="245.2" y="386.7" width="1.15" height="1.15"/><rect x="250.8" y="430.1" width="1.15" height="1.15"/><rect x="376.9" y="389.7" width="1.15" height="1.15"/><rect x="141.2" y="447.4" width="1.15" height="1.15"/><rect x="183.2" y="420.5" width="1.15" height="1.15"/><rect x="65.3" y="450.2" width="1.15" height="1.15"/><rect x="116.6" y="442.7" width="1.15" height="1.15"/><rect x="301.5" y="420.6" width="1.15" height="1.15"/><rect x="308.3" y="403.7" width="1.15" height="1.15"/><rect x="47.7" y="515.8" width="1.15" height="1.15"/><rect x="171.7" y="426.8" width="1.15" height="1.15"/><rect x="177.8" y="408.3" width="1.15" height="1.15"/><rect x="179.0" y="435.2" width="1.15" height="1.15"/><rect x="53.0" y="495.6" width="1.15" height="1.15"/><rect x="353.0" y="375.3" width="1.15" height="1.15"/><rect x="140.1" y="480.9" width="1.15" height="1.15"/><rect x="188.3" y="397.6" width="1.15" height="1.15"/><rect x="213.3" y="422.7" width="1.15" height="1.15"/><rect x="443.7" y="344.8" width="1.15" height="1.15"/><rect x="261.2" y="432.1" width="1.15" height="1.15"/><rect x="101.6" y="449.0" width="1.15" height="1.15"/><rect x="345.4" y="382.6" width="1.15" height="1.15"/><rect x="220.9" y="385.8" width="1.15" height="1.15"/><rect x="413.8" y="382.3" width="1.15" height="1.15"/><rect x="92.1" y="451.3" width="1.15" height="1.15"/><rect x="208.5" y="423.2" width="1.15" height="1.15"/><rect x="57.6" y="522.2" width="1.15" height="1.15"/><rect x="238.4" y="421.1" width="1.15" height="1.15"/><rect x="236.2" y="380.5" width="1.15" height="1.15"/><rect x="243.9" y="376.8" width="1.15" height="1.15"/><rect x="88.7" y="444.0" width="1.15" height="1.15"/><rect x="253.2" y="381.1" width="1.15" height="1.15"/><rect x="146.9" y="454.6" width="1.15" height="1.15"/><rect x="192.7" y="441.9" width="1.15" height="1.15"/><rect x="301.9" y="375.4" width="1.15" height="1.15"/><rect x="230.5" y="388.9" width="1.15" height="1.15"/><rect x="197.0" y="393.5" width="1.15" height="1.15"/><rect x="207.8" y="437.4" width="1.15" height="1.15"/><rect x="222.1" y="398.7" width="1.15" height="1.15"/><rect x="182.5" y="438.9" width="1.15" height="1.15"/><rect x="362.2" y="397.1" width="1.15" height="1.15"/><rect x="206.5" y="393.1" width="1.15" height="1.15"/><rect x="63.3" y="477.4" width="1.15" height="1.15"/><rect x="203.5" y="418.5" width="1.15" height="1.15"/><rect x="144.4" y="444.0" width="1.15" height="1.15"/><rect x="455.5" y="369.3" width="1.15" height="1.15"/><rect x="154.1" y="444.2" width="1.15" height="1.15"/><rect x="108.7" y="411.6" width="1.15" height="1.15"/><rect x="160.3" y="467.3" width="1.15" height="1.15"/><rect x="294.3" y="361.8" width="1.15" height="1.15"/><rect x="187.2" y="445.3" width="1.15" height="1.15"/><rect x="153.7" y="478.3" width="1.15" height="1.15"/><rect x="196.4" y="440.6" width="1.15" height="1.15"/><rect x="143.6" y="477.3" width="1.15" height="1.15"/><rect x="149.8" y="472.1" width="1.15" height="1.15"/><rect x="127.4" y="466.2" width="1.15" height="1.15"/><rect x="409.6" y="380.2" width="1.15" height="1.15"/><rect x="224.9" y="409.5" width="1.15" height="1.15"/><rect x="132.2" y="417.9" width="1.15" height="1.15"/><rect x="182.3" y="409.3" width="1.15" height="1.15"/><rect x="110.5" y="479.4" width="1.15" height="1.15"/><rect x="133.8" y="435.1" width="1.15" height="1.15"/><rect x="57.9" y="465.4" width="1.15" height="1.15"/><rect x="267.8" y="437.6" width="1.15" height="1.15"/><rect x="187.4" y="420.9" width="1.15" height="1.15"/><rect x="64.5" y="471.3" width="1.15" height="1.15"/><rect x="112.6" y="457.4" width="1.15" height="1.15"/><rect x="174.4" y="431.9" width="1.15" height="1.15"/><rect x="188.5" y="445.3" width="1.15" height="1.15"/><rect x="148.4" y="439.2" width="1.15" height="1.15"/><rect x="151.6" y="452.1" width="1.15" height="1.15"/><rect x="254.5" y="376.8" width="1.15" height="1.15"/><rect x="212.8" y="423.2" width="1.15" height="1.15"/><rect x="261.7" y="395.2" width="1.15" height="1.15"/><rect x="132.7" y="484.9" width="1.15" height="1.15"/><rect x="158.8" y="395.3" width="1.15" height="1.15"/><rect x="206.1" y="387.1" width="1.15" height="1.15"/><rect x="69.5" y="437.5" width="1.15" height="1.15"/><rect x="255.8" y="380.4" width="1.15" height="1.15"/><rect x="456.9" y="318.7" width="1.15" height="1.15"/><rect x="100.7" y="488.3" width="1.15" height="1.15"/><rect x="222.2" y="412.2" width="1.15" height="1.15"/><rect x="111.3" y="409.9" width="1.15" height="1.15"/><rect x="129.7" y="464.0" width="1.15" height="1.15"/><rect x="282.4" y="420.8" width="1.15" height="1.15"/><rect x="315.8" y="372.2" width="1.15" height="1.15"/><rect x="179.2" y="462.9" width="1.15" height="1.15"/><rect x="307.4" y="389.6" width="1.15" height="1.15"/><rect x="358.8" y="358.2" width="1.15" height="1.15"/><rect x="97.4" y="490.8" width="1.15" height="1.15"/><rect x="238.3" y="430.6" width="1.15" height="1.15"/><rect x="388.2" y="373.1" width="1.15" height="1.15"/><rect x="433.6" y="369.1" width="1.15" height="1.15"/><rect x="386.4" y="392.5" width="1.15" height="1.15"/><rect x="247.4" y="426.5" width="1.15" height="1.15"/><rect x="65.9" y="499.6" width="1.15" height="1.15"/><rect x="303.6" y="400.8" width="1.15" height="1.15"/><rect x="62.9" y="484.3" width="1.15" height="1.15"/><rect x="58.6" y="453.0" width="1.15" height="1.15"/><rect x="177.6" y="405.1" width="1.15" height="1.15"/><rect x="114.3" y="440.2" width="1.15" height="1.15"/><rect x="277.0" y="386.0" width="1.15" height="1.15"/><rect x="71.0" y="503.3" width="1.15" height="1.15"/><rect x="235.9" y="409.2" width="1.15" height="1.15"/><rect x="59.8" y="513.0" width="1.15" height="1.15"/><rect x="53.9" y="456.0" width="1.15" height="1.15"/><rect x="74.6" y="480.0" width="1.15" height="1.15"/><rect x="425.6" y="378.0" width="1.15" height="1.15"/><rect x="118.8" y="446.6" width="1.15" height="1.15"/><rect x="109.1" y="470.5" width="1.15" height="1.15"/><rect x="101.3" y="473.0" width="1.15" height="1.15"/><rect x="238.6" y="432.7" width="1.15" height="1.15"/><rect x="180.0" y="400.2" width="1.15" height="1.15"/><rect x="203.9" y="402.6" width="1.15" height="1.15"/><rect x="200.2" y="410.6" width="1.15" height="1.15"/><rect x="422.2" y="378.5" width="1.15" height="1.15"/><rect x="116.6" y="452.4" width="1.15" height="1.15"/><rect x="85.7" y="461.5" width="1.15" height="1.15"/><rect x="191.2" y="391.8" width="1.15" height="1.15"/><rect x="98.8" y="492.5" width="1.15" height="1.15"/><rect x="368.3" y="393.0" width="1.15" height="1.15"/><rect x="174.6" y="440.0" width="1.15" height="1.15"/><rect x="149.1" y="465.3" width="1.15" height="1.15"/><rect x="397.2" y="381.5" width="1.15" height="1.15"/><rect x="38.5" y="517.6" width="1.15" height="1.15"/><rect x="154.4" y="468.9" width="1.15" height="1.15"/><rect x="340.9" y="368.2" width="1.15" height="1.15"/><rect x="216.1" y="433.5" width="1.15" height="1.15"/><rect x="328.0" y="373.0" width="1.15" height="1.15"/><rect x="123.9" y="487.7" width="1.15" height="1.15"/><rect x="213.1" y="423.7" width="1.15" height="1.15"/><rect x="62.6" y="489.6" width="1.15" height="1.15"/><rect x="269.7" y="432.1" width="1.15" height="1.15"/><rect x="309.4" y="426.7" width="1.15" height="1.15"/><rect x="106.4" y="489.5" width="1.15" height="1.15"/><rect x="183.7" y="428.3" width="1.15" height="1.15"/><rect x="159.4" y="449.5" width="1.15" height="1.15"/><rect x="42.6" y="494.6" width="1.15" height="1.15"/><rect x="253.5" y="435.4" width="1.15" height="1.15"/><rect x="294.7" y="327.0" width="1.15" height="1.15"/><rect x="160.7" y="419.8" width="1.15" height="1.15"/><rect x="204.9" y="430.8" width="1.15" height="1.15"/><rect x="240.9" y="374.5" width="1.15" height="1.15"/><rect x="207.0" y="444.1" width="1.15" height="1.15"/><rect x="101.1" y="459.4" width="1.15" height="1.15"/><rect x="226.0" y="389.0" width="1.15" height="1.15"/><rect x="128.2" y="411.7" width="1.15" height="1.15"/><rect x="94.0" y="413.9" width="1.15" height="1.15"/><rect x="65.2" y="488.8" width="1.15" height="1.15"/><rect x="293.9" y="372.6" width="1.15" height="1.15"/><rect x="98.9" y="499.3" width="1.15" height="1.15"/><rect x="313.8" y="359.2" width="1.15" height="1.15"/><rect x="125.3" y="461.0" width="1.15" height="1.15"/><rect x="165.4" y="429.7" width="1.15" height="1.15"/><rect x="69.1" y="434.2" width="1.15" height="1.15"/><rect x="173.5" y="395.7" width="1.15" height="1.15"/><rect x="55.2" y="488.5" width="1.15" height="1.15"/><rect x="143.2" y="471.5" width="1.15" height="1.15"/><rect x="180.4" y="429.7" width="1.15" height="1.15"/><rect x="234.1" y="438.4" width="1.15" height="1.15"/><rect x="310.6" y="415.9" width="1.15" height="1.15"/><rect x="92.4" y="460.6" width="1.15" height="1.15"/><rect x="210.0" y="428.2" width="1.15" height="1.15"/><rect x="192.9" y="439.2" width="1.15" height="1.15"/><rect x="201.3" y="438.3" width="1.15" height="1.15"/><rect x="80.6" y="441.1" width="1.15" height="1.15"/><rect x="198.0" y="416.4" width="1.15" height="1.15"/><rect x="415.3" y="346.6" width="1.15" height="1.15"/><rect x="133.5" y="452.8" width="1.15" height="1.15"/><rect x="123.3" y="470.4" width="1.15" height="1.15"/><rect x="346.4" y="375.5" width="1.15" height="1.15"/><rect x="175.9" y="466.0" width="1.15" height="1.15"/><rect x="44.4" y="513.5" width="1.15" height="1.15"/><rect x="52.7" y="459.8" width="1.15" height="1.15"/><rect x="190.2" y="398.6" width="1.15" height="1.15"/><rect x="91.3" y="465.1" width="1.15" height="1.15"/><rect x="79.1" y="500.1" width="1.15" height="1.15"/><rect x="238.1" y="434.4" width="1.15" height="1.15"/><rect x="262.2" y="391.0" width="1.15" height="1.15"/><rect x="77.1" y="501.2" width="1.15" height="1.15"/><rect x="223.7" y="433.6" width="1.15" height="1.15"/><rect x="38.5" y="477.6" width="1.15" height="1.15"/><rect x="67.3" y="485.5" width="1.15" height="1.15"/><rect x="320.1" y="411.2" width="1.15" height="1.15"/><rect x="233.6" y="438.0" width="1.15" height="1.15"/><rect x="96.2" y="461.2" width="1.15" height="1.15"/><rect x="39.3" y="515.9" width="1.15" height="1.15"/><rect x="105.2" y="435.9" width="1.15" height="1.15"/><rect x="434.4" y="384.6" width="1.15" height="1.15"/><rect x="135.8" y="410.9" width="1.15" height="1.15"/><rect x="91.9" y="458.3" width="1.15" height="1.15"/><rect x="222.9" y="427.3" width="1.15" height="1.15"/><rect x="230.5" y="429.3" width="1.15" height="1.15"/><rect x="277.8" y="410.1" width="1.15" height="1.15"/><rect x="190.0" y="435.1" width="1.15" height="1.15"/><rect x="50.8" y="509.0" width="1.15" height="1.15"/><rect x="96.0" y="478.4" width="1.15" height="1.15"/><rect x="112.6" y="440.9" width="1.15" height="1.15"/><rect x="135.6" y="474.5" width="1.15" height="1.15"/><rect x="117.9" y="452.8" width="1.15" height="1.15"/><rect x="166.1" y="441.8" width="1.15" height="1.15"/><rect x="373.7" y="363.4" width="1.15" height="1.15"/><rect x="434.8" y="315.7" width="1.15" height="1.15"/><rect x="378.4" y="378.9" width="1.15" height="1.15"/><rect x="124.2" y="411.1" width="1.15" height="1.15"/><rect x="59.4" y="494.8" width="1.15" height="1.15"/><rect x="384.7" y="356.4" width="1.15" height="1.15"/><rect x="182.0" y="465.4" width="1.15" height="1.15"/><rect x="212.4" y="416.4" width="1.15" height="1.15"/><rect x="161.1" y="454.7" width="1.15" height="1.15"/><rect x="245.9" y="443.3" width="1.15" height="1.15"/><rect x="163.5" y="474.6" width="1.15" height="1.15"/><rect x="241.3" y="387.3" width="1.15" height="1.15"/><rect x="225.7" y="445.8" width="1.15" height="1.15"/><rect x="246.7" y="416.7" width="1.15" height="1.15"/><rect x="323.1" y="383.3" width="1.15" height="1.15"/><rect x="260.2" y="432.7" width="1.15" height="1.15"/><rect x="59.0" y="457.0" width="1.15" height="1.15"/><rect x="107.6" y="443.9" width="1.15" height="1.15"/><rect x="244.9" y="383.7" width="1.15" height="1.15"/><rect x="41.0" y="492.5" width="1.15" height="1.15"/><rect x="366.8" y="362.6" width="1.15" height="1.15"/><rect x="347.4" y="354.6" width="1.15" height="1.15"/><rect x="52.2" y="522.7" width="1.15" height="1.15"/><rect x="90.5" y="457.2" width="1.15" height="1.15"/><rect x="84.4" y="474.1" width="1.15" height="1.15"/><rect x="222.1" y="383.3" width="1.15" height="1.15"/><rect x="134.6" y="440.2" width="1.15" height="1.15"/><rect x="294.5" y="347.7" width="1.15" height="1.15"/><rect x="46.2" y="482.4" width="1.15" height="1.15"/><rect x="393.6" y="389.3" width="1.15" height="1.15"/><rect x="149.4" y="390.3" width="1.15" height="1.15"/><rect x="253.4" y="397.2" width="1.15" height="1.15"/><rect x="175.2" y="402.0" width="1.15" height="1.15"/><rect x="127.4" y="390.3" width="1.15" height="1.15"/><rect x="277.7" y="393.2" width="1.15" height="1.15"/><rect x="392.4" y="354.5" width="1.15" height="1.15"/><rect x="244.4" y="356.3" width="1.15" height="1.15"/><rect x="331.4" y="411.7" width="1.15" height="1.15"/><rect x="124.8" y="457.8" width="1.15" height="1.15"/><rect x="84.0" y="490.7" width="1.15" height="1.15"/><rect x="133.9" y="436.7" width="1.15" height="1.15"/><rect x="46.8" y="494.4" width="1.15" height="1.15"/><rect x="297.6" y="427.1" width="1.15" height="1.15"/><rect x="318.9" y="378.1" width="1.15" height="1.15"/><rect x="232.4" y="415.0" width="1.15" height="1.15"/><rect x="191.7" y="429.5" width="1.15" height="1.15"/><rect x="42.8" y="466.4" width="1.15" height="1.15"/><rect x="205.0" y="447.1" width="1.15" height="1.15"/><rect x="167.2" y="432.2" width="1.15" height="1.15"/><rect x="216.9" y="385.4" width="1.15" height="1.15"/><rect x="120.8" y="490.5" width="1.15" height="1.15"/><rect x="165.6" y="440.8" width="1.15" height="1.15"/><rect x="259.6" y="438.4" width="1.15" height="1.15"/><rect x="185.8" y="425.6" width="1.15" height="1.15"/><rect x="61.4" y="478.6" width="1.15" height="1.15"/><rect x="104.8" y="464.8" width="1.15" height="1.15"/><rect x="94.9" y="484.3" width="1.15" height="1.15"/><rect x="67.6" y="503.6" width="1.15" height="1.15"/><rect x="166.0" y="427.9" width="1.15" height="1.15"/><rect x="145.1" y="441.1" width="1.15" height="1.15"/><rect x="70.0" y="456.7" width="1.15" height="1.15"/><rect x="38.5" y="477.3" width="1.15" height="1.15"/><rect x="226.8" y="443.0" width="1.15" height="1.15"/><rect x="260.5" y="429.7" width="1.15" height="1.15"/><rect x="177.3" y="441.3" width="1.15" height="1.15"/><rect x="260.4" y="378.9" width="1.15" height="1.15"/><rect x="185.8" y="453.8" width="1.15" height="1.15"/><rect x="38.6" y="489.9" width="1.15" height="1.15"/><rect x="287.2" y="431.7" width="1.15" height="1.15"/><rect x="297.0" y="372.4" width="1.15" height="1.15"/><rect x="136.7" y="483.8" width="1.15" height="1.15"/><rect x="246.8" y="378.3" width="1.15" height="1.15"/><rect x="170.7" y="466.4" width="1.15" height="1.15"/><rect x="50.5" y="474.2" width="1.15" height="1.15"/><rect x="335.0" y="377.1" width="1.15" height="1.15"/><rect x="345.6" y="349.4" width="1.15" height="1.15"/><rect x="266.9" y="375.5" width="1.15" height="1.15"/><rect x="66.3" y="456.8" width="1.15" height="1.15"/><rect x="187.6" y="452.1" width="1.15" height="1.15"/><rect x="221.3" y="442.2" width="1.15" height="1.15"/><rect x="264.0" y="383.7" width="1.15" height="1.15"/><rect x="149.0" y="453.3" width="1.15" height="1.15"/><rect x="373.2" y="373.4" width="1.15" height="1.15"/><rect x="331.8" y="387.9" width="1.15" height="1.15"/><rect x="157.0" y="428.9" width="1.15" height="1.15"/><rect x="214.2" y="389.2" width="1.15" height="1.15"/><rect x="202.9" y="408.0" width="1.15" height="1.15"/><rect x="436.4" y="386.8" width="1.15" height="1.15"/><rect x="73.3" y="486.4" width="1.15" height="1.15"/><rect x="86.4" y="497.7" width="1.15" height="1.15"/><rect x="289.2" y="390.3" width="1.15" height="1.15"/><rect x="96.0" y="467.8" width="1.15" height="1.15"/><rect x="50.0" y="488.4" width="1.15" height="1.15"/><rect x="244.6" y="402.9" width="1.15" height="1.15"/><rect x="378.9" y="406.5" width="1.15" height="1.15"/><rect x="220.4" y="386.8" width="1.15" height="1.15"/><rect x="152.9" y="431.6" width="1.15" height="1.15"/><rect x="99.7" y="468.4" width="1.15" height="1.15"/><rect x="71.9" y="475.8" width="1.15" height="1.15"/><rect x="224.6" y="420.4" width="1.15" height="1.15"/><rect x="210.6" y="453.1" width="1.15" height="1.15"/><rect x="88.7" y="496.4" width="1.15" height="1.15"/><rect x="105.5" y="465.3" width="1.15" height="1.15"/><rect x="58.3" y="464.9" width="1.15" height="1.15"/><rect x="147.8" y="452.6" width="1.15" height="1.15"/><rect x="431.7" y="396.0" width="1.15" height="1.15"/><rect x="50.1" y="469.7" width="1.15" height="1.15"/><rect x="44.5" y="492.2" width="1.15" height="1.15"/><rect x="156.4" y="424.4" width="1.15" height="1.15"/><rect x="147.2" y="435.0" width="1.15" height="1.15"/><rect x="184.2" y="449.6" width="1.15" height="1.15"/><rect x="311.6" y="425.4" width="1.15" height="1.15"/><rect x="296.2" y="376.7" width="1.15" height="1.15"/><rect x="98.1" y="476.1" width="1.15" height="1.15"/><rect x="301.3" y="403.9" width="1.15" height="1.15"/><rect x="279.0" y="391.6" width="1.15" height="1.15"/><rect x="342.7" y="393.3" width="1.15" height="1.15"/><rect x="221.6" y="417.0" width="1.15" height="1.15"/><rect x="294.2" y="400.7" width="1.15" height="1.15"/><rect x="271.8" y="408.0" width="1.15" height="1.15"/><rect x="162.0" y="444.5" width="1.15" height="1.15"/><rect x="113.4" y="479.3" width="1.15" height="1.15"/><rect x="155.9" y="473.5" width="1.15" height="1.15"/><rect x="259.5" y="408.7" width="1.15" height="1.15"/><rect x="302.2" y="409.9" width="1.15" height="1.15"/><rect x="234.3" y="397.7" width="1.15" height="1.15"/><rect x="298.7" y="411.3" width="1.15" height="1.15"/><rect x="195.6" y="423.7" width="1.15" height="1.15"/><rect x="116.3" y="415.9" width="1.15" height="1.15"/><rect x="200.7" y="418.7" width="1.15" height="1.15"/><rect x="306.3" y="397.1" width="1.15" height="1.15"/><rect x="76.3" y="486.5" width="1.15" height="1.15"/><rect x="108.4" y="485.9" width="1.15" height="1.15"/><rect x="413.9" y="386.2" width="1.15" height="1.15"/><rect x="75.5" y="443.4" width="1.15" height="1.15"/><rect x="307.7" y="403.7" width="1.15" height="1.15"/><rect x="224.6" y="414.6" width="1.15" height="1.15"/><rect x="237.4" y="415.2" width="1.15" height="1.15"/><rect x="174.8" y="452.6" width="1.15" height="1.15"/><rect x="57.6" y="505.4" width="1.15" height="1.15"/><rect x="105.4" y="468.7" width="1.15" height="1.15"/><rect x="292.4" y="404.9" width="1.15" height="1.15"/><rect x="138.3" y="461.2" width="1.15" height="1.15"/><rect x="145.7" y="433.5" width="1.15" height="1.15"/><rect x="146.3" y="419.9" width="1.15" height="1.15"/><rect x="223.5" y="416.1" width="1.15" height="1.15"/><rect x="269.8" y="372.6" width="1.15" height="1.15"/><rect x="77.1" y="509.0" width="1.15" height="1.15"/><rect x="384.2" y="396.5" width="1.15" height="1.15"/><rect x="247.5" y="434.7" width="1.15" height="1.15"/><rect x="43.4" y="501.9" width="1.15" height="1.15"/><rect x="139.5" y="477.0" width="1.15" height="1.15"/><rect x="122.7" y="470.6" width="1.15" height="1.15"/><rect x="286.5" y="421.9" width="1.15" height="1.15"/><rect x="251.8" y="395.7" width="1.15" height="1.15"/><rect x="253.6" y="398.4" width="1.15" height="1.15"/><rect x="81.6" y="470.6" width="1.15" height="1.15"/><rect x="120.9" y="463.8" width="1.15" height="1.15"/><rect x="100.3" y="402.6" width="1.15" height="1.15"/><rect x="226.3" y="408.0" width="1.15" height="1.15"/><rect x="370.3" y="400.2" width="1.15" height="1.15"/><rect x="92.3" y="464.4" width="1.15" height="1.15"/><rect x="158.1" y="419.8" width="1.15" height="1.15"/><rect x="206.9" y="410.2" width="1.15" height="1.15"/><rect x="328.9" y="397.6" width="1.15" height="1.15"/><rect x="203.5" y="425.4" width="1.15" height="1.15"/><rect x="254.5" y="425.4" width="1.15" height="1.15"/><rect x="208.6" y="427.2" width="1.15" height="1.15"/><rect x="327.3" y="391.5" width="1.15" height="1.15"/><rect x="82.4" y="487.6" width="1.15" height="1.15"/><rect x="350.5" y="404.6" width="1.15" height="1.15"/><rect x="131.7" y="422.2" width="1.15" height="1.15"/><rect x="43.4" y="527.3" width="1.15" height="1.15"/><rect x="362.3" y="358.7" width="1.15" height="1.15"/></g>
 <polyline points="38.0,201.7 38.7,215.0 39.7,249.2 41.7,245.0 44.2,228.3 45.8,223.3 48.0,211.7 49.2,221.7 50.8,235.0 52.5,232.5 54.7,205.0 55.8,223.3 57.5,239.2 61.3,243.3 63.0,220.0 65.0,234.2 67.8,207.5 70.0,227.5 71.7,240.0 73.7,218.3 75.8,249.2 78.0,235.8 80.3,250.8 82.5,240.0 84.5,221.7 86.7,236.7 88.3,236.7 91.2,251.7 93.3,245.0 95.3,224.2 97.5,240.0 101.3,253.0 103.7,233.3 106.7,243.3 110.0,255.0 112.5,243.3 114.2,228.3 117.0,220.8 119.2,228.3 120.8,239.2 123.3,228.3 126.7,224.2 129.2,240.0 130.0,239.2 131.7,239.2 135.8,263.3 139.5,240.0 142.0,259.2 143.7,245.8 145.8,255.0 150.0,248.3 155.0,251.3 158.3,241.7 161.2,260.0 165.0,241.7 167.5,269.2 169.5,255.0 173.7,269.2 178.3,267.5 180.0,276.7 182.0,270.8 184.2,273.3 186.7,261.7 190.3,275.8 193.0,255.0 195.0,276.7 197.2,258.3 201.3,275.8 203.8,248.3 205.8,264.2 207.5,251.7 211.7,279.2 213.3,270.0 215.8,275.8 218.3,274.2 220.5,255.8 223.0,284.2 227.0,270.0 229.7,288.3 231.7,283.3 233.3,290.8 235.3,270.0 240.0,285.0 244.7,292.5 248.3,289.2 250.0,265.8 254.7,286.7 256.3,275.8 259.2,302.5 263.3,286.7 265.0,300.0 269.2,297.5 274.2,277.5 278.0,298.3 279.7,285.0 284.2,306.7 286.3,310.0 289.2,301.7 290.8,308.3 292.5,292.5 294.7,288.3 297.0,294.2 299.5,307.5 301.7,291.7 305.3,291.7 307.8,311.7 309.5,300.8 311.7,328.3 314.7,298.3 316.3,309.2 318.3,298.3 320.8,320.8 323.3,320.8 324.2,320.0 326.7,310.0 329.2,315.8 330.8,335.8 333.0,315.8 334.7,312.5 337.5,332.5 341.7,315.8 345.8,316.7 350.0,323.3 352.8,335.0 355.0,329.2 356.7,335.0 360.8,331.7 363.0,327.5 366.7,352.5 370.0,342.5 373.7,339.2 375.8,346.7 377.8,333.3 380.3,347.5 382.0,342.5 385.0,350.0 388.3,359.2 392.5,347.5 395.8,358.3 399.1,347.3 401.3,357.3 403.3,374.0 404.7,362.7 407.3,360.0 409.7,360.7 412.0,369.3 414.7,362.0 418.3,358.7 420.9,374.7 422.7,369.3 424.9,372.7 428.7,378.7 432.7,380.4 435.6,372.7 438.7,380.0 441.3,390.7 443.6,372.7 445.3,378.7 447.6,376.7 450.7,394.7 452.0,385.3 454.3,383.3 456.3,387.3 458.0,396.7 461.3,409.6" fill="none" stroke="#1396cc" stroke-width="1.02" stroke-linejoin="round"/>
 <rect x="36" y="564.2" width="427" height="1.4" fill="#0c0c0c"/>
 <rect x="36" y="140" width="1.3" height="426" fill="#0c0c0c"/>
 <g stroke="#444" stroke-width="1"><path d="M37.6 566V568.2 M79.9 566V568.2 M122.3 566V568.2 M164.6 566V568.2 M207.0 566V568.2 M249.3 566V568.2 M291.6 566V568.2 M334.0 566V568.2 M376.3 566V568.2 M418.7 566V568.2 M461.0 566V568.2"/><path d="M58.8 566V567.2 M101.1 566V567.2 M143.5 566V567.2 M185.8 566V567.2 M228.1 566V567.2 M270.5 566V567.2 M312.8 566V567.2 M355.2 566V567.2 M397.5 566V567.2 M439.8 566V567.2" stroke="#888"/></g>
</svg>

<!-- axis labels -->
<div class="ax" style="left:38px;top:130.5px;font-size:8.6px">MB/s</div>
<div class="ax" style="left:449.5px;top:130.5px;font-size:8.2px">ms</div>
<div class="ax axl" style="top:136.5px">250</div>
<div class="ax axl" style="top:221px">200</div>
<div class="ax axl" style="top:306px">150</div>
<div class="ax axl" style="top:390px">100</div>
<div class="ax axl" style="top:475px">50</div>
<div class="ax" style="left:465px;top:136.5px">50</div>
<div class="ax" style="left:465px;top:221px">40</div>
<div class="ax" style="left:465px;top:306px">30</div>
<div class="ax" style="left:465px;top:390px">20</div>
<div class="ax" style="left:465px;top:475px">10</div>
<div class="ax axb" style="left:17.6px">0</div>
<div class="ax axb" style="left:59.9px">1200</div>
<div class="ax axb" style="left:102.3px">2400</div>
<div class="ax axb" style="left:144.6px">3600</div>
<div class="ax axb" style="left:187.0px">4800</div>
<div class="ax axb" style="left:229.3px">6000</div>
<div class="ax axb" style="left:271.6px">7200</div>
<div class="ax axb" style="left:314.0px">8400</div>
<div class="ax axb" style="left:356.3px">9600</div>
<div class="ax axb" style="left:398.7px">10800</div>
<div class="ax" style="left:443.5px;top:568px">12000gB</div>

<!-- right panel -->
<div class="a" style="left:498px;top:124.5px;width:71px;height:23px;background:#e1e1e1;border:1.6px solid #0078d7"></div>
<div class="t" style="left:498px;top:130px;width:71px;text-align:center;font-size:10px">开始</div>
<div class="sep" style="top:158px"></div>
<div class="a" style="left:495px;top:167.5px;width:10px;height:10px;border:1px solid #333;border-radius:50%;background:#fff"></div>
<div class="a" style="left:497.6px;top:170.1px;width:4.8px;height:4.8px;border-radius:50%;background:#333"></div>
<div class="t" style="left:508px;top:166.5px;font-size:10px">读取</div>
<div class="a" style="left:495px;top:184.5px;width:10px;height:10px;border:1px solid #333;border-radius:50%;background:#fff"></div>
<div class="t" style="left:508px;top:183.5px;font-size:10px">写入</div>
<div class="sep" style="top:200.5px"></div>
<div class="cb" style="top:211px"></div>
<div class="t" style="left:508px;top:210px;font-size:10px">短行程</div>
<div class="a" style="left:494.5px;top:230px;width:59.5px;height:21px;background:#fff;border:1px solid #c6c6c6"></div>
<div class="a" style="left:540px;top:231px;width:13px;height:19px;background:#f0f0f0;border-left:1px solid #d0d0d0"></div>
<div class="a" style="left:540px;top:240.5px;width:13px;height:1px;background:#d0d0d0"></div>
<svg class="a" style="left:543.5px;top:234px" width="6" height="13" viewBox="0 0 6 13"><path d="M0.8 3.6L3 1.2L5.2 3.6Z M0.8 9.6L3 12L5.2 9.6Z" fill="#666"/></svg>
<div class="t" style="left:498px;top:234px;font-size:10px;color:#8a8a8a">40</div>
<div class="t" style="left:565.5px;top:235px;font-size:10px">GB</div>
<div class="cb" style="top:264px"><svg width="8" height="8" viewBox="0 0 8 8"><path d="M1.2 4L3.2 6.2L7 1.4" stroke="#222" stroke-width="1" fill="none"/></svg></div>
<div class="t" style="left:508px;top:263px;font-size:10px">传输速率</div>
<div class="sep" style="top:277.5px"></div>
<div class="t" style="left:495px;top:282px;font-size:10px">最小</div>
<div class="bb" style="top:297px;color:#18b4f4">90.7 MB/s</div>
<div class="t" style="left:495px;top:317px;font-size:10px">最大</div>
<div class="bb" style="top:332px;color:#18b4f4">214.4 MB/s</div>
<div class="t" style="left:495px;top:350px;font-size:10px">平均</div>
<div class="bb" style="top:365px;color:#18b4f4">160.5 MB/s</div>
<div class="sep" style="top:389px"></div>
<div class="cb" style="top:398px"><svg width="8" height="8" viewBox="0 0 8 8"><path d="M1.2 4L3.2 6.2L7 1.4" stroke="#222" stroke-width="1" fill="none"/></svg></div>
<div class="t" style="left:508px;top:397px;font-size:10px">访问时间</div>
<div class="bb" style="top:412.5px;color:#f0e800">15.3 ms</div>
<div class="cb" style="top:435px"><svg width="8" height="8" viewBox="0 0 8 8"><path d="M1.2 4L3.2 6.2L7 1.4" stroke="#222" stroke-width="1" fill="none"/></svg></div>
<div class="t" style="left:508px;top:434px;font-size:10px">突发速率</div>
<div class="bb" style="top:449px;color:#fff">285.4 MB/s</div>
<div class="t" style="left:495px;top:469px;font-size:10px">CPU 使用率</div>
<div class="bb" style="top:484.5px;color:#fff">1.7%</div>
<div class="t" style="left:495px;top:516.5px;font-size:10px">通过次数</div>
<div class="a" style="left:494.5px;top:531px;width:75px;height:21px;background:#fff;border:1px solid #9c9c9c"></div>
<div class="a" style="left:556px;top:532px;width:13px;height:19px;background:#f0f0f0;border:1px solid #c0c0c0"></div>
<div class="a" style="left:556px;top:541px;width:13px;height:1px;background:#c0c0c0"></div>
<svg class="a" style="left:559.5px;top:535px" width="6" height="13" viewBox="0 0 6 13"><path d="M0.8 3.6L3 1.2L5.2 3.6Z M0.8 9.6L3 12L5.2 9.6Z" fill="#333"/></svg>
<div class="t" style="left:499px;top:535.5px;font-size:10px">1</div>
<div class="a" style="left:495px;top:561.5px;width:51px;height:12.5px;background:#06b025"></div>
<div class="t" style="left:551px;top:562px;font-size:10px">1/1</div>

<!-- window frame -->
<div class="a" style="left:0;top:0;width:600px;height:1px;background:#7aa3a3"></div>
<div class="a" style="left:0;top:0;width:1px;height:619px;background:#3f7878"></div>
<div class="a" style="left:0;top:618px;width:600px;height:1px;background:#3c6868"></div>
<div class="a" style="left:599px;top:0;width:1px;height:619px;background:#4a7a7a"></div>
</body></html>
